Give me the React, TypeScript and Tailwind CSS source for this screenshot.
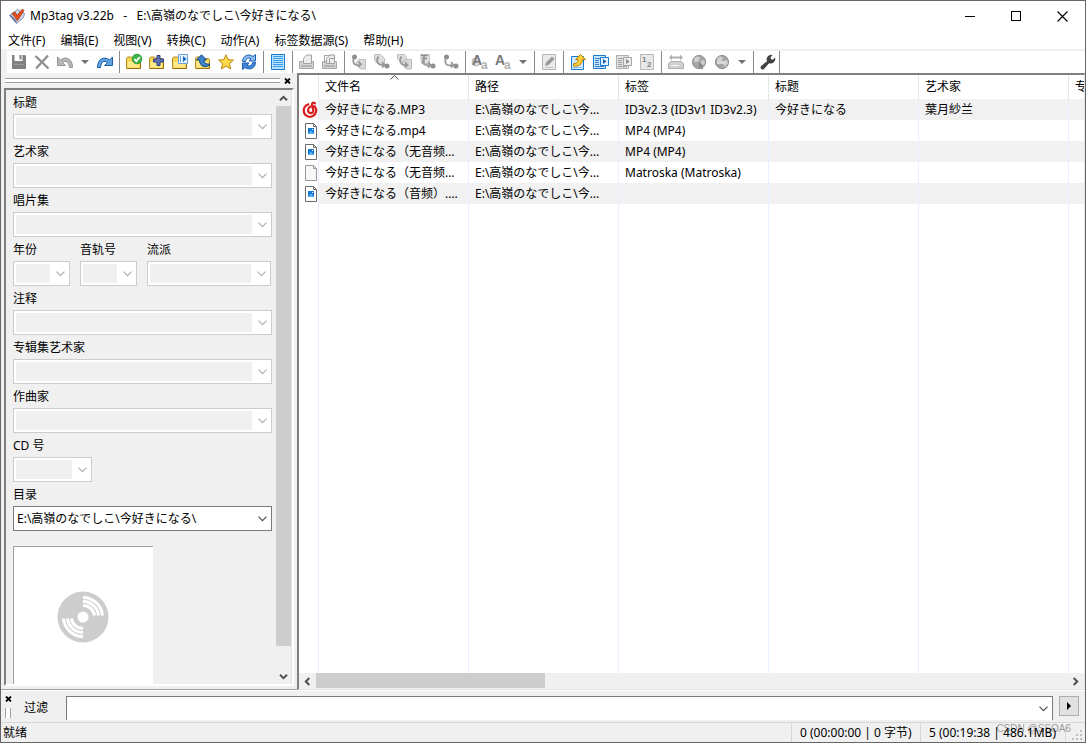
import React from 'react';
import clsx from 'clsx';

interface IconProps {
  children: React.ReactNode;
}

const Icon: React.FC<IconProps> = ({ children }) => (
  <svg width="16" height="16" viewBox="0 0 16 16" fill="none" className="overflow-visible" aria-hidden="true">
    {children}
  </svg>
);

const Chevron: React.FC<{ className?: string }> = ({ className }) => (
  <svg width="9" height="6" viewBox="0 0 9 6" fill="none" className={className} aria-hidden="true">
    <path d="M0.5 0.7 4.5 4.7 8.5 0.7" stroke="currentColor" strokeWidth="1.2" />
  </svg>
);

// Scrollbar arrow, drawn pointing up and rotated for the other directions
const ScrollArrow: React.FC<{ className?: string }> = ({ className }) => (
  <svg width="9" height="9" viewBox="0 0 9 9" fill="none" className={className} aria-hidden="true">
    <path d="M1 6.3 4.5 2.8 8 6.3" stroke="#505050" strokeWidth="2" />
  </svg>
);

// Toolbar drawings
const Folder = () => (
  <>
    <path d="M0.5 14.5v-10l1-1.500h4l1.500 1.500h6.500l1 1v9z" fill="#f7d452" stroke="#b08c22" />
    <path d="M1.500 7.500h11.500v6h-11.500z" fill="#fce98c" />
    <path d="M1 14.500h13.500V9" stroke="#94700f" />
  </>
);

const Printer = ({ double }: { double?: boolean }) => (
  <>
    <path d="M0.500 7.500h14v7h-14z" fill="#d4d4d4" stroke="#a8a8a8" />
    <path d="M4.500 9.500V4.500l3-3.500h5v8.500z" fill="#ebebeb" stroke="#a3a3a3" />
    {double && <path d="M2.500 9V1.500h6M7.500 9.500v-5h5" stroke="#a3a3a3" />}
    <path d="M2 12h11" stroke="#b4b4b4" strokeWidth="2" />
  </>
);

const Tag = () => (
  <path d="M7.500 5.500h7v9.500H9.500L4.500 10z" fill="#dadada" stroke="#bdbdbd" />
);

const Globe = () => (
  <>
    <circle cx="8" cy="8" r="6.600" fill="#a5a5a5" stroke="#929292" />
    <path d="M3 4.500 6 2.500l3 1-1 3-3 2-2-1zM10 7l3-1 1 3-3 4-1.500-2z" fill="#cfcfcf" />
  </>
);

const icons: Record<string, React.ReactNode> = {
  save: (
    <>
      <path d="M1 1h2.500v6h8V1H14l1 1v13H1z" fill="#808080" />
      <path d="M8.500 1h2v4.500h-2z" fill="#808080" />
      <path d="M3 10h10v1H3z" fill="#9a9a9a" />
    </>
  ),
  remove: <path d="M1.500 2 14.500 14.500M14 1.500 2 14.500" stroke="#909090" strokeWidth="2.400" />,
  undo: (
    <path d="M0.500 3v8.500h8L5.500 8.500C9 6 12 8 12.500 13.500h3C15.500 5 9 1.500 3.500 6z" fill="#b8b8b8" stroke="#949494" />
  ),
  redo: (
    <path d="M15.500 3v8.500h-8l3-3C7 6 4 8 3.500 13.500h-3C0.500 5 7 1.500 12.500 6z" fill="#5fa3df" stroke="#1f5fa8" />
  ),
  folderCheck: (
    <>
      <Folder />
      <circle cx="11" cy="5" r="4.800" fill="#3fb648" stroke="#218a2c" strokeWidth="0.800" />
      <path d="m8.300 5 2 2.200 3.500-4.200" stroke="#fff" strokeWidth="1.800" />
    </>
  ),
  folderAdd: (
    <>
      <Folder />
      <path d="M8 1.500h3v3.500h3.500v3H11v3.500H8V8H4.500V5H8z" fill="#6076b8" stroke="#2c3a78" />
    </>
  ),
  folderPlaylist: (
    <>
      <Folder />
      <path d="M6.500 0.500h9v9h-9z" fill="#e4f1ff" stroke="#6f9fd3" />
      <path d="M8.500 2v6" stroke="#6f9fd3" />
      <path d="m11 2 3.500 3-3.500 3z" fill="#1767c2" />
    </>
  ),
  folderUp: (
    <>
      <Folder />
      <path d="M1.500 6 6.500 0.800 11.500 6H9c0 3 2 4.500 6 4-2 4-10.500 4-10.500-4z" fill="#3e84ca" stroke="#154a8c" />
    </>
  ),
  star: (
    <path d="m8 0.800 2.100 4.800 5.300.5-4 3.500 1.300 5.400L8 12l-4.700 3 1.300-5.400-4-3.500 5.300-.5z" fill="#ffd94a" stroke="#b8860b" />
  ),
  refresh: (
    <>
      <path d="M1.500 7.500C1.500 2 7.500-.8 12 2.500L14.500 0.500v6.500H8l2-2.200C7.500 3.200 5 4.500 4.500 7.500z" fill="#8dbdf0" stroke="#1d5cb0" />
      <path d="M14.500 8.500c0 5.500-6 8.300-10.500 5l-2.500 2V9H8l-2 2.200c2.500 1.600 5 .3 5.500-2.700z" fill="#3f86d8" stroke="#1d5cb0" />
    </>
  ),
  list: (
    <>
      <path d="M1.500 0.500h13v15h-13z" fill="#b9e2ff" stroke="#1979cf" />
      <path d="M3 2.500h10M3 4.500h10M3 6.500h10M3 8.500h10M3 10.500h10M3 12.500h10" stroke="#3b9cea" />
    </>
  ),
  printer: <Printer />,
  printers: <Printer double />,
  tagFile: (
    <>
      <Tag />
      <circle cx="3.500" cy="3" r="2.500" fill="#8f8f8f" />
      <path d="M2.500 5c-1 5.500 2 7 7 5.500M7.500 7.500l2.500 2.800L7.500 13" stroke="#999" strokeWidth="1.800" />
    </>
  ),
  fileTag: (
    <>
      <path d="M0.500 0.500h6l4 4v6H5l-4.500-4z" fill="#dedede" stroke="#bdbdbd" />
      <path d="M4.500 2.500c-3 4.500-1 9 5.500 8.500M8 8l2.500 3L8 13.500" stroke="#999" strokeWidth="1.800" />
      <circle cx="13" cy="12" r="2.500" fill="#8f8f8f" />
    </>
  ),
  tagTag: (
    <>
      <path d="M0.500 0.500h7l2 3v4.500H5l-4.500-3z" fill="#dedede" stroke="#bdbdbd" />
      <Tag />
      <path d="M4.500 2.500c-3 4.500-1 9 5.500 8.500M8 8l2.500 3L8 13.500" stroke="#999" strokeWidth="1.800" />
    </>
  ),
  textTag: (
    <>
      <path d="M0.500 0.500h9v9h-8z" fill="#e2e2e2" stroke="#c4c4c4" />
      <path d="M1 1.500h7M2 4.500h5M4 1v8" stroke="#8c8c8c" strokeWidth="1.300" />
      <path d="M3 6c-1 4 2 6 7 5M8 8l2.500 3L8 13.500" stroke="#999" strokeWidth="1.800" />
      <circle cx="13" cy="12" r="2.500" fill="#8f8f8f" />
    </>
  ),
  tagText: (
    <>
      <circle cx="3.500" cy="3" r="2.500" fill="#8f8f8f" />
      <path d="M2.500 5c-1 6 2 7 7.500 6M8 8l2.500 3L8 13.500" stroke="#999" strokeWidth="1.800" />
      <circle cx="13" cy="12" r="2.500" fill="#8f8f8f" />
    </>
  ),
  edit: (
    <>
      <path d="M1.500 0.500h13v15h-13z" fill="#ebebeb" stroke="#b4b4b4" />
      <path d="m4 12 1-3.500 6-6 2.500 2.500-6 6z" fill="#999" />
      <path d="M4 13.500h8" stroke="#c4c4c4" />
    </>
  ),
  exportFile: (
    <>
      <path d="M1.500 2.500h12v13h-12z" fill="#d4ebff" stroke="#1979cf" />
      <path d="M3 13.500h9" stroke="#8bc1ef" />
      <path d="M3.500 9.500c3.500 0 4.500-1.500 4.500-4H5.500L10.500.5l5 5H12.500c0 4.500-4 7.500-9 6.500z" fill="#fccb36" stroke="#b6820e" />
    </>
  ),
  playlist: (
    <>
      <path d="M0.500 1.500h12v13h-12z" fill="#c9e7ff" stroke="#1979cf" />
      <path d="M2 4.500h9M2 6.500h4M2 8.500h4M2 10.500h4M2 12.500h9" stroke="#3d7dbf" />
      <path d="M7.500 3.500h8v8h-8z" fill="#e4f3ff" stroke="#1979cf" />
      <path d="m10 5 3.500 2.500L10 10z" fill="#155ea8" />
    </>
  ),
  playlistOff: (
    <>
      <path d="M0.500 1.500h12v13h-12z" fill="#e2e2e2" stroke="#b0b0b0" />
      <path d="M2 4.500h9M2 6.500h4M2 8.500h4M2 10.500h4M2 12.500h9" stroke="#a0a0a0" />
      <path d="M7.500 3.500h8v8h-8z" fill="#ebebeb" stroke="#a8a8a8" />
      <path d="m10 5 3.500 2.500L10 10z" fill="#8a8a8a" />
    </>
  ),
  drive: (
    <>
      <path d="M0.500 14.500v-5l2-2h11l2 2v5z" fill="#d0d0d0" stroke="#b0b0b0" />
      <path d="M1 3.500 4 0.500V2.500h8V.5l3 3-3 3V4.500H4v2z" fill="#b0b0b0" />
      <path d="M3 11.500h8" stroke="#f5f5f5" />
    </>
  ),
  globe: (
    <>
      <Globe />
      <path d="m8 8 5 4-2 .5 1 2.500-1.500.5-1-2.500-1.500 1.500z" fill="#888" />
    </>
  ),
  globeList: (
    <>
      <Globe />
      <path d="M3 7h9v3H3z" fill="#d9d9d9" />
    </>
  ),
  wrench: (
    <path d="M15 3.500a4.600 4.600 0 0 1-6 5.700L4.200 14.800a2 2 0 0 1-3-2.800L7 7.200A4.600 4.600 0 0 1 12.500 1L10.500 3.500l.5 1.800 1.800.5z" fill="#424242" />
  ),
};

// "-" is a separator, "v" the small drop arrow beside a button
const toolbar: [string, string][] = [
  ['save', '保存标签'],
  ['remove', '移除标签'],
  ['undo', '撤销'],
  ['v', '撤销列表'],
  ['redo', '重做'],
  ['-', ''],
  ['folderCheck', '更改目录'],
  ['folderAdd', '添加目录'],
  ['folderPlaylist', '打开播放列表'],
  ['folderUp', '上级目录'],
  ['star', '收藏目录'],
  ['refresh', '刷新'],
  ['-', ''],
  ['list', '全选文件'],
  ['-', ''],
  ['printer', '复制标签'],
  ['printers', '粘贴标签'],
  ['-', ''],
  ['tagFile', '标签 - 文件名'],
  ['fileTag', '文件名 - 标签'],
  ['tagTag', '文件名 - 文件名'],
  ['textTag', '文本文件 - 标签'],
  ['tagText', '标签 - 标签'],
  ['-', ''],
  ['actions', '动作'],
  ['quick', '快速动作'],
  ['v', '动作列表'],
  ['-', ''],
  ['edit', '扩展标签'],
  ['-', ''],
  ['exportFile', '导出'],
  ['playlist', '播放列表'],
  ['playlistOff', '选中项播放列表'],
  ['numbers', '自动编号向导'],
  ['-', ''],
  ['drive', '标签数据源'],
  ['globe', '网络数据源'],
  ['globeList', '数据源'],
  ['v', '数据源列表'],
  ['-', ''],
  ['wrench', '选项'],
];

// These three buttons carry letters or digits
const LetterIcon = ({ name }: { name: string }) => {
  if (name === 'numbers') {
    return (
      <Icon>
        <path d="M1.500 0.500h13v15h-13z" fill="#e8e8e8" stroke="#b8b8b8" />
        <g className="font-['Liberation_Sans',sans-serif] font-bold" fontSize="8" fill="#808080">
          <text x="3" y="8">1</text>
          <text x="8" y="13">2</text>
        </g>
      </Icon>
    );
  }
  return (
    <Icon>
      {name === 'actions' && <circle cx="4" cy="8" r="4" fill="#dcdcdc" stroke="#b4b4b4" />}
      <g className="font-['Liberation_Sans',sans-serif] font-bold">
        <text x="0" y="11" fontSize="14" fill="#777">A</text>
        <text x="9" y="15" fontSize="12" fill="#b0b0b0">a</text>
      </g>
    </Icon>
  );
};

const Toolbar: React.FC = () => (
  <div className="flex h-[22px] items-stretch border-l-6 border-[#f0f0f0]">
    {toolbar.map(([name, label], i) => {
      if (name === '-') {
        return <div key={i} className="mr-[2px] ml-[3px] w-px bg-[#8a8a8a]" />;
      }
      if (name === 'v') {
        return (
          <button key={i} aria-label={label} className="flex w-[17px] items-center justify-center">
            <svg width="8" height="4" viewBox="0 0 8 4" aria-hidden="true">
              <path d="M0 0h8L4 4z" fill="#707070" />
            </svg>
          </button>
        );
      }
      return (
        <button
          key={i}
          aria-label={label}
          className={clsx(
            'flex w-[23px] items-center justify-center',
            name === 'wrench' && 'box-content border-r border-[#8a8a8a]',
          )}
        >
          {icons[name] ? <Icon>{icons[name]}</Icon> : <LetterIcon name={name} />}
        </button>
      );
    })}
  </div>
);

interface FieldProps {
  id: string;
  label: string;
  value?: string;
  className?: string;
}

const Field: React.FC<FieldProps> = ({ id, label, value, className = 'w-[259px]' }) => (
  <div className={className}>
    <label htmlFor={id} className="block h-6 leading-[26px]">
      {label}
    </label>
    <div
      className={clsx(
        'flex h-[25px] items-center border bg-white p-[2px]',
        value ? 'border-[#7a7a7a] text-[#505050]' : 'border-[#cccccc] text-[#b0b0b0]',
      )}
    >
      <select
        id={id}
        disabled={!value}
        className={clsx(
          'h-[19px] min-w-0 flex-1 appearance-none text-black outline-none',
          value ? 'bg-white pl-px' : 'bg-[#f0f0f0]',
        )}
      >
        {value && <option>{value}</option>}
      </select>
      <Chevron className="mr-[2px] ml-[6px] shrink-0" />
    </div>
  </div>
);

const SmallClose = () => (
  <svg width="7" height="6" viewBox="0 0 7 6" aria-hidden="true">
    <path d="M1 0.500 6 5.500M6 0.500 1 5.500" stroke="#000" strokeWidth="1.800" />
  </svg>
);

const TagPanel: React.FC = () => (
  <aside className="flex w-[296px] shrink-0 flex-col border-b border-[#a0a0a0] px-[3px] pb-[3px]">
    <div className="flex h-[15px] shrink-0 items-center gap-1 pl-px">
      <div className="h-[5px] flex-1 border-y border-[#a0a0a0] bg-white" />
      <button aria-label="关闭标签面板" className="mr-[3px]">
        <SmallClose />
      </button>
    </div>
    <div className="flex min-h-0 flex-1 border-2 border-t-[#808080] border-r-white border-b-white border-l-[#808080]">
      <form className="min-w-0 flex-1 overflow-hidden pl-[7px]">
        <Field id="title" label="标题" />
        <Field id="artist" label="艺术家" />
        <Field id="album" label="唱片集" />
        <div className="flex gap-[10px]">
          <Field id="year" label="年份" className="w-[57px]" />
          <Field id="track" label="音轨号" className="w-[57px]" />
          <Field id="genre" label="流派" className="w-[124px]" />
        </div>
        <Field id="comment" label="注释" />
        <Field id="albumartist" label="专辑集艺术家" />
        <Field id="composer" label="作曲家" />
        <Field id="disc" label="CD 号" className="w-[79px]" />
        <Field id="directory" label="目录" value="E:\高嶺のなでしこ\今好きになる\" />
        <div className="mt-[15px] flex size-[140px] items-center justify-center border-t border-l border-[#a0a0a0] bg-white pr-px">
          <svg width="52" height="52" viewBox="0 0 52 52" fill="none" aria-hidden="true">
            <circle cx="26" cy="26" r="25.500" fill="#cdcdcd" />
            <path
              d="M26 6.500a19.500 19.500 0 0 1 19.500 18M26 10.500a15.500 15.500 0 0 1 15.500 14M26 14.500a11.500 11.500 0 0 1 11.500 10M26 45.500a19.500 19.500 0 0 1-19.500-18M26 41.500a15.500 15.500 0 0 1-15.500-14M26 37.500a11.500 11.500 0 0 1-11.500-10"
              stroke="#fff"
              strokeWidth="3"
            />
            <circle cx="26" cy="26" r="9" fill="#cdcdcd" />
            <circle cx="26" cy="26" r="5.500" fill="#fff" />
          </svg>
        </div>
      </form>
      <div className="flex w-4 shrink-0 flex-col border-r border-[#e3e3e3]">
        <button aria-label="向上滚动" className="flex h-4 shrink-0 items-center justify-center">
          <ScrollArrow />
        </button>
        <div className="min-h-0 flex-1">
          <div className="h-[96%] bg-[#cdcdcd]" />
        </div>
        <button aria-label="向下滚动" className="flex h-4 shrink-0 items-center justify-center">
          <ScrollArrow className="rotate-180" />
        </button>
      </div>
    </div>
  </aside>
);

type FileKind = 'music' | 'video' | 'blank';

const FileIcon: React.FC<{ kind: FileKind }> = ({ kind }) => {
  if (kind === 'music') {
    return (
      <Icon>
        <path
          d="M5.300 2.400A6.300 6.300 0 1 0 11.800 4.500C9 3.200 5.200 4.800 5 8.300c0 3.800 5.800 3.700 5.300 0L9 2.600C8.800.5 10.500.3 12 1.300"
          stroke="#d81e1e"
          strokeWidth="2.200"
          strokeLinecap="round"
        />
      </Icon>
    );
  }
  return (
    <Icon>
      <path d="M2.500 0.500h8l3 3v12h-11z" fill={kind === 'video' ? '#fff' : '#f8f8f8'} stroke={kind === 'video' ? '#6b6b6b' : '#999'} />
      <path d="M10.500 0.500v3h3" stroke={kind === 'video' ? '#6b6b6b' : '#999'} />
      {kind === 'video' && (
        <>
          <path d="M5 5h6v6H5z" fill="#1677d2" />
          <path d="m5 11 3-3.500 3 3.500z" fill="#57b4f5" />
          <path d="M9 6h1v1H9z" fill="#fff" />
        </>
      )}
    </Icon>
  );
};

const path = 'E:\\高嶺のなでしこ\\今好きになる\\';

const files: { kind: FileKind; cells: string[] }[] = [
  { kind: 'music', cells: ['今好きになる.MP3', path, 'ID3v2.3 (ID3v1 ID3v2.3)', '今好きになる', '葉月紗兰', ''] },
  { kind: 'video', cells: ['今好きになる.mp4', path, 'MP4 (MP4)', '', '', ''] },
  { kind: 'video', cells: ['今好きになる（无音频）.mp4', path, 'MP4 (MP4)', '', '', ''] },
  { kind: 'blank', cells: ['今好きになる（无音频）.mkv', path, 'Matroska (Matroska)', '', '', ''] },
  { kind: 'video', cells: ['今好きになる（音频）.m4a', path, '', '', '', ''] },
];

const columns = ['文件名', '路径', '标签', '标题', '艺术家', '专辑'];

const FileList: React.FC = () => (
  <section className="flex min-w-0 flex-1 flex-col border-t-2 border-r border-b border-l-2 border-t-[#808080] border-r-[#e3e3e3] border-b-[#e3e3e3] border-l-[#808080] bg-white">
    <div className="min-h-0 flex-1 overflow-hidden">
      <table className="h-full w-[920px] table-fixed border-separate border-spacing-0 text-left">
        <colgroup>
          <col className="w-5" />
          {columns.map((name) => (
            <col key={name} className="w-[150px]" />
          ))}
        </colgroup>
        <thead>
          <tr className="h-6">
            <th aria-label="图标" className="border-r border-[#e5e5e5] p-0" />
            {columns.map((name, i) => (
              <th key={name} scope="col" className="relative border-r border-[#e5e5e5] py-0 pr-2 pl-[6px] font-normal">
                {name}
                {i === 0 && (
                  <svg width="9" height="5" viewBox="0 0 9 5" fill="none" className="absolute top-0 left-[71px]" aria-hidden="true">
                    <path d="M0.500 4.500 4.500 0.500l4 4" stroke="#555" />
                  </svg>
                )}
              </th>
            ))}
          </tr>
        </thead>
        <tbody>
          {files.map((file, row) => (
            <tr key={row} className="h-[21px]">
              <td className="border-r border-[#e6f0ff] p-0 pl-1">
                <div className="flex w-4">
                  <FileIcon kind={file.kind} />
                </div>
              </td>
              {file.cells.map((cell, i) => (
                <td
                  key={i}
                  className={clsx(
                    'truncate border-r border-[#e6f0ff] py-0 pr-1 pl-[6px]',
                    row % 2 === 0 && 'bg-[#f1f1f1]',
                  )}
                >
                  {i < 2 ? <div className="max-w-[134px] truncate">{cell}</div> : cell}
                </td>
              ))}
            </tr>
          ))}
          <tr>
            <td className="border-r border-[#e6f0ff] p-0" />
            {columns.map((name) => (
              <td key={name} className="border-r border-[#e6f0ff] p-0" />
            ))}
          </tr>
        </tbody>
      </table>
    </div>
    <div className="flex h-4 shrink-0 bg-[#f0f0f0]">
      <button aria-label="向左滚动" className="flex w-[17px] items-center justify-center">
        <ScrollArrow className="-rotate-90" />
      </button>
      <div className="flex-1">
        <div className="h-[15px] w-[30.5%] bg-[#cdcdcd]" />
      </div>
      <button aria-label="向右滚动" className="flex w-[17px] items-center justify-center">
        <ScrollArrow className="rotate-90" />
      </button>
    </div>
  </section>
);

const TitleBar: React.FC = () => (
  <header className="flex h-[30px] shrink-0 items-center bg-white pl-2">
    <svg width="16" height="16" viewBox="0 0 16 16" fill="none" aria-hidden="true">
      <path d="m0.500 7.500 8-6 7 4-1 4-7 6z" fill="#cfd5e4" stroke="#8d97b5" />
      <path d="m0.500 7.500 7 8v-3l-6-6z" fill="#6f7ba3" />
      <path d="m3 5.500 3-1.500 2 3.500L13.500 1l1.500 1.500-6.500 10z" fill="#e8501c" stroke="#982a0c" strokeWidth="0.700" />
    </svg>
    <h1 className="flex-1 pl-[5px] whitespace-pre">{'Mp3tag v3.22b   -   E:\\高嶺のなでしこ\\今好きになる\\'}</h1>
    <div className="flex self-stretch">
      <button aria-label="最小化" className="flex w-[46px] items-center justify-center">
        <span className="h-px w-[10px] bg-black" />
      </button>
      <button aria-label="最大化" className="flex w-[46px] items-center justify-center">
        <span className="size-[10px] border border-black" />
      </button>
      <button aria-label="关闭" className="flex w-[46px] items-center justify-center">
        <svg width="11" height="11" viewBox="0 0 11 11" aria-hidden="true">
          <path d="M0.500 0.500 10.500 10.500M10.500 0.500 0.500 10.500" stroke="#000" strokeWidth="1.100" />
        </svg>
      </button>
    </div>
  </header>
);

const menus = ['文件(F)', '编辑(E)', '视图(V)', '转换(C)', '动作(A)', '标签数据源(S)', '帮助(H)'];

const App: React.FC = () => (
  <div className="flex h-screen w-full flex-col overflow-hidden border border-[#666666] bg-[#f0f0f0] font-['Noto_Sans','Noto_Sans_CJK_SC',sans-serif] text-[12px] leading-[18px] text-black">
    <TitleBar />
    <nav className="flex h-[18px] shrink-0 gap-[15px] bg-white pl-[7px] leading-[20px]">
      {menus.map((menu) => (
        <button key={menu}>{menu}</button>
      ))}
    </nav>
    <div className="shrink-0 border-t-2 border-[#f0f0f0] bg-white">
      <Toolbar />
    </div>

    <main className="flex min-h-0 flex-1">
      <TagPanel />
      <FileList />
    </main>

    <div className="flex h-8 shrink-0 items-start border-t border-white pt-[5px] pr-[6px]">
      <div className="flex w-[14px] flex-col items-center gap-[6px]">
        <button aria-label="关闭过滤器">
          <SmallClose />
        </button>
        <div className="h-[10px] w-[6px] border-x border-[#a0a0a0] bg-white" />
      </div>
      <label htmlFor="filter" className="w-[51px] pl-[9px] leading-6">
        过滤
      </label>
      <div className="flex h-6 flex-1 items-center border-x border-t border-[#7a7a7a] bg-white text-[#505050]">
        <input id="filter" type="text" className="h-full min-w-0 flex-1 px-1 text-black outline-none" />
        <Chevron className="mr-1" />
      </div>
      <button
        aria-label="过滤选项"
        className="ml-[6px] flex size-5 items-center justify-center border border-[#adadad] bg-[#e1e1e1]"
      >
        <svg width="4" height="8" viewBox="0 0 4 8" aria-hidden="true">
          <path d="M0 0v8l4-4z" fill="#000" />
        </svg>
      </button>
    </div>

    <footer className="relative flex h-5 shrink-0 items-center border-t border-[#d7d7d7] pl-[2px] leading-[20px]">
      <span className="flex-1">就绪</span>
      <span className="w-[129px] border-l border-[#d7d7d7] pl-2 whitespace-nowrap">0 (00:00:00 | 0 字节)</span>
      <span className="w-[145px] border-l border-[#d7d7d7] pl-2 whitespace-nowrap">5 (00:19:38 | 486.1MB)</span>
      <span className="h-4 w-5 border-l border-[#d7d7d7]">
        <svg width="18" height="16" viewBox="0 0 18 16" fill="#bfbfbf" aria-hidden="true">
          <path d="M14 5h2v2h-2zM10 9h2v2h-2zM14 9h2v2h-2zM6 13h2v2H6zM10 13h2v2h-2zM14 13h2v2h-2z" />
        </svg>
      </span>
      <span className="absolute -top-1 right-[14px] font-['Liberation_Sans',sans-serif] text-[10px] text-black/40">
        CSDN @SSOA6
      </span>
    </footer>
  </div>
);

export default App;
